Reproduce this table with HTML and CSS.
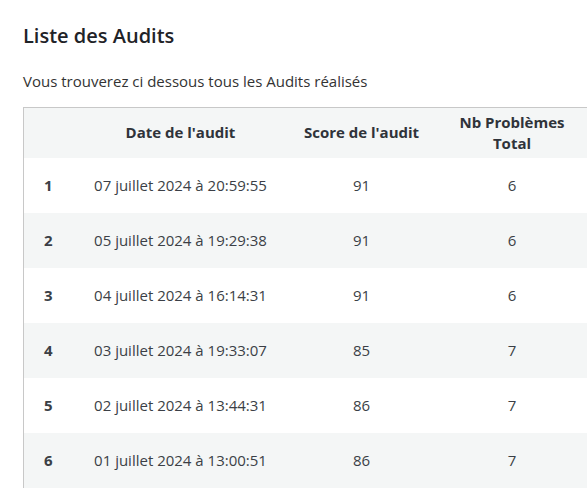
FILE: index.html
```html
<!DOCTYPE html>
<html lang="fr">
<head>
  <meta charset="UTF-8" />
  <title>Liste des Audits</title>
  <meta name="viewport" content="width=device-width, initial-scale=1.0" />
  <link rel="stylesheet" href="styles.css">
</head>
<body>
  <div class="page">
    <h1 class="page-title">Liste des Audits</h1>
    <p class="page-intro">Vous trouverez ci dessous tous les Audits réalisés</p>

    <table class="audits">
      <thead>
        <tr>
          <th class="col-num"></th>
          <th class="col-date">Date de l'audit</th>
          <th class="col-score">Score de l'audit</th>
          <th class="col-total">Nb Problèmes Total</th>
        </tr>
      </thead>
      <tbody>
        <tr><th>1</th><td>07 juillet 2024 à 20:59:55</td><td>91</td><td>6</td></tr>
        <tr><th>2</th><td>05 juillet 2024 à 19:29:38</td><td>91</td><td>6</td></tr>
        <tr><th>3</th><td>04 juillet 2024 à 16:14:31</td><td>91</td><td>6</td></tr>
        <tr><th>4</th><td>03 juillet 2024 à 19:33:07</td><td>85</td><td>7</td></tr>
        <tr><th>5</th><td>02 juillet 2024 à 13:44:31</td><td>86</td><td>7</td></tr>
        <tr><th>6</th><td>01 juillet 2024 à 13:00:51</td><td>86</td><td>7</td></tr>
      </tbody>
    </table>
  </div>
</body>
</html>
```

FILE: styles.css
```css
* { box-sizing: border-box; }
html, body {
  margin: 0;
  padding: 0;
  overflow: hidden;
}
body {
  background: #fff;
  color: #212529;
  font-family: "Open Sans", "Noto Sans", sans-serif;
  font-size: 15px;
}
.page {
  padding: 20px 0 0 23px;
}
.page-title {
  font-size: 20px;
  font-weight: 600;
  margin: 0 0 18px;
  line-height: 32px;
  color: #1f2328;
}
.page-intro {
  margin: 0 0 15px;
  color: #333;
  line-height: 22px;
}
.audits {
  border-collapse: collapse;
  border-top: 1px solid #c8c8c8;
  border-left: 1px solid #c8c8c8;
  color: #3b3f46;
  table-layout: fixed;
  width: 566px;
}
.audits th,
.audits td {
  text-align: center;
  padding: 0 8px;
  height: 55px;
}
.audits thead th {
  height: 50px;
  font-weight: 700;
  color: #2f333a;
  line-height: 21px;
}
.audits tbody th { font-weight: 700; }
.audits tbody tr:nth-child(even),
.audits thead tr { background: #f4f6f6; }
.col-num { width: 49px; }
.col-date { width: 216px; }
.col-score { width: 146px; }
.col-total { width: 155px; padding: 0 20px; }
```
